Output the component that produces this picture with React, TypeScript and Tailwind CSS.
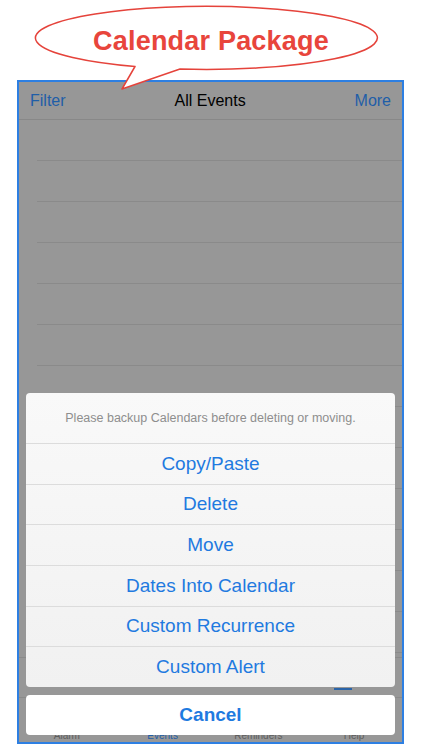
import React from 'react'

const actions = ['Copy/Paste', 'Delete', 'Move', 'Dates Into Calendar', 'Custom Recurrence', 'Custom Alert']
const tabs = ['Alarm', 'Events', 'Reminders', 'Help']

const Bubble = () => (
  <svg
    className="absolute left-0 top-0 z-10 pointer-events-none"
    width="422"
    height="95"
    viewBox="0 0 422 95"
  >
    <path
      d="M135 66.5 A171 31.5 0 1 1 180 69 L122 89 Z"
      fill="#ffffff"
      stroke="#e5433b"
      strokeWidth="1.5"
      strokeLinejoin="round"
    />
  </svg>
)

export default function App() {
  return (
    <div className="relative w-[422px] h-[750px] bg-white overflow-hidden font-['Liberation_Sans',Arial,sans-serif]">
      <div className="relative h-[80px]">
        <Bubble />
        <div className="relative z-20 flex justify-center pt-[25px] text-[27px] leading-[32px] font-bold text-[#e8453c] tracking-[0.2px]">
          Calendar Package
        </div>
      </div>

      <div className="relative ml-[17px] w-[387px] h-[664px] border-2 border-[#2d7fe2] bg-[#979797] flex flex-col overflow-hidden">
        {/* nav bar */}
        <div className="h-[38px] shrink-0 border-b border-[#888888] flex items-center justify-between px-[11px] text-[16px]">
          <span className="text-[#1f5ea8]">Filter</span>
          <span className="text-black">All Events</span>
          <span className="text-[#1f5ea8]">More</span>
        </div>

        {/* list */}
        <div className="flex-1 overflow-hidden">
          {Array.from({ length: 13 }).map((_, i) => (
            <div key={i} className="ml-[18px] h-[41px] border-b border-[#8a8a8a]" />
          ))}
        </div>

        {/* toolbar */}
        <div className="h-[40px] shrink-0 border-t border-[#8a8a8a] flex items-end justify-end pr-[50px] pb-[7px]">
          <div className="w-[18px] h-[2px] bg-[#2a64a8]" />
        </div>

        {/* tab bar */}
        <div className="h-[45px] shrink-0 border-t border-[#8a8a8a] grid grid-cols-4 items-end">
          {tabs.map((t) => (
            <div
              key={t}
              className={`text-center text-[10px] leading-[11px] pb-[1px] ${
                t === 'Events' ? 'text-[#1f5ea8]' : 'text-[#5e5e5e]'
              }`}
            >
              {t}
            </div>
          ))}
        </div>

        {/* action sheet */}
        <div className="absolute left-[7px] right-[7px] bottom-[7px] flex flex-col gap-[8px]">
          <div className="rounded-[4px] overflow-hidden bg-gradient-to-b from-[#f9f9f9] to-[#f1f1f1]">
            <div className="h-[50px] flex items-center justify-center text-[12.5px] text-[#8e8e8e]">
              Please backup Calendars before deleting or moving.
            </div>
            {actions.map((a) => (
              <div
                key={a}
                className="h-[40.67px] border-t border-[#dcdcdc] flex items-center justify-center text-[19px] text-[#1f7ae0]"
              >
                {a}
              </div>
            ))}
          </div>
          <div className="h-[40px] rounded-[4px] bg-white flex items-center justify-center text-[19px] font-bold text-[#1f7ae0]">
            Cancel
          </div>
        </div>
      </div>
    </div>
  )
}
